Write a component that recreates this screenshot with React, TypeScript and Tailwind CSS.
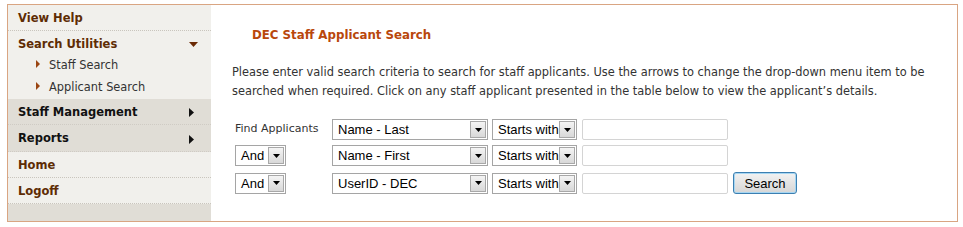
import React from "react";

const V = { fontFamily: '"DejaVu Sans", Verdana, sans-serif' } as const;
const A = { fontFamily: '"Liberation Sans", Arial, sans-serif' } as const;

function DropBtn() {
  return (
    <div className="w-[16px] h-[17px] bg-gradient-to-b from-[#f4f4f4] to-[#d8d8d8] border border-[#a8a8a8] flex items-center justify-center mr-[1px]">
      <svg width="7" height="4" viewBox="0 0 7 4">
        <path d="M0 0h7L3.5 4z" fill="#000" />
      </svg>
    </div>
  );
}

function Select({ w, text }: { w: string; text: string }) {
  return (
    <div
      className={`${w} h-[21px] border border-[#a5a5a5] bg-white flex items-center justify-between pl-[5px] text-[13px] text-black`}
      style={A}
    >
      <span className="leading-none">{text}</span>
      <DropBtn />
    </div>
  );
}

function Input() {
  return <div className="w-[146px] h-[21px] border border-[#d4d4d4] rounded-[2px] bg-white" />;
}

function SubItem({ text }: { text: string }) {
  return (
    <div className="h-[22px] flex items-center pl-[28px] bg-[#f1f0ec]">
      <svg width="4" height="8" viewBox="0 0 4 8" className="mr-[9px] -mt-[4px]">
        <path d="M0 0L4 4L0 8z" fill="#9a4512" />
      </svg>
      <span className="text-[11.4px] text-[#333]">{text}</span>
    </div>
  );
}

function Arrow() {
  return (
    <svg width="5" height="9" viewBox="0 0 5 9">
      <path d="M0 0L5 4.5L0 9z" fill="#111" />
    </svg>
  );
}

export default function App() {
  return (
    <div className="pt-[4px] pl-[7px] bg-white" style={V}>
      <div className="flex w-[951px] h-[218px] border border-[#d9a582]">
        <nav className="w-[203px] flex flex-col bg-[#e0ddd6]">
          <div className="h-[26px] flex items-center pl-[10px] pt-[2px] bg-[#f1f0ec] border-b border-dotted border-[#c9c5bd]">
            <span className="text-[11.5px] font-bold text-[#5e2c04]">View Help</span>
          </div>
          <div className="h-[24px] flex items-center justify-between pl-[10px] pr-[13px] bg-[#f1f0ec]">
            <span className="text-[11.5px] font-bold text-[#5e2c04] mt-[3px]">Search Utilities</span>
            <svg width="9" height="5" viewBox="0 0 9 5" className="mt-[3px]">
              <path d="M0 0h9L4.5 5z" fill="#6b2a05" />
            </svg>
          </div>
          <SubItem text="Staff Search" />
          <SubItem text="Applicant Search" />
          <div className="h-[26px] flex items-center justify-between pl-[10px] pr-[17px] pt-[2px] border-b border-dotted border-[#cfcbc4]">
            <span className="text-[11.5px] font-bold text-[#111]">Staff Management</span>
            <Arrow />
          </div>
          <div className="h-[27px] flex items-center justify-between pl-[10px] pr-[17px] pt-[2px] border-b border-dotted border-[#cfcbc4]">
            <span className="text-[11.5px] font-bold text-[#111]">Reports</span>
            <Arrow />
          </div>
          <div className="h-[26px] flex items-center pl-[10px] pt-[2px] bg-[#f1f0ec] border-b border-dotted border-[#c9c5bd]">
            <span className="text-[11.5px] font-bold text-[#5e2c04]">Home</span>
          </div>
          <div className="h-[26px] flex items-center pl-[10px] pt-[2px] bg-[#f1f0ec] border-b border-dotted border-[#c9c5bd]">
            <span className="text-[11.5px] font-bold text-[#5e2c04]">Logoff</span>
          </div>
          <div className="flex-1" />
        </nav>
        <main className="flex-1 bg-white pl-[21px] pr-[20px]">
          <h1 className="mt-[22px] ml-[20px] text-[11.8px] font-bold text-[#b9470c] leading-[16px]">
            DEC Staff Applicant Search
          </h1>
          <p className="mt-[20px] text-[11.4px] leading-[19px] text-[#333]">
            Please enter valid search criteria to search for staff applicants. Use the arrows to change the drop-down menu item to be searched when required. Click on any staff applicant presented in the table below to view the applicant’s details.
          </p>
          <div className="mt-[18px] ml-[3px] flex flex-col gap-[5px]">
            <div className="flex items-center">
              <div className="w-[97px] text-[11px] text-[#333]">Find Applicants</div>
              <Select w="w-[156px]" text="Name - Last" />
              <div className="w-[4px]" />
              <Select w="w-[85px]" text="Starts with" />
              <div className="w-[5px]" />
              <Input />
            </div>
            <div className="flex items-center">
              <div className="w-[97px]">
                <Select w="w-[51px]" text="And" />
              </div>
              <Select w="w-[156px]" text="Name - First" />
              <div className="w-[4px]" />
              <Select w="w-[85px]" text="Starts with" />
              <div className="w-[5px]" />
              <Input />
            </div>
            <div className="flex items-center mt-[1px]">
              <div className="w-[97px]">
                <Select w="w-[51px]" text="And" />
              </div>
              <Select w="w-[156px]" text="UserID - DEC" />
              <div className="w-[4px]" />
              <Select w="w-[85px]" text="Starts with" />
              <div className="w-[5px]" />
              <Input />
              <div className="w-[5px]" />
              <button
                className="w-[64px] h-[22px] rounded-[3px] border border-[#3c7fb1] bg-gradient-to-b from-[#f2f2f2] to-[#d6d6d6] text-[13px] text-black leading-none shadow-[inset_0_0_0_1px_#a6d6f2]"
                style={A}
              >
                Search
              </button>
            </div>
          </div>
        </main>
      </div>
    </div>
  );
}
